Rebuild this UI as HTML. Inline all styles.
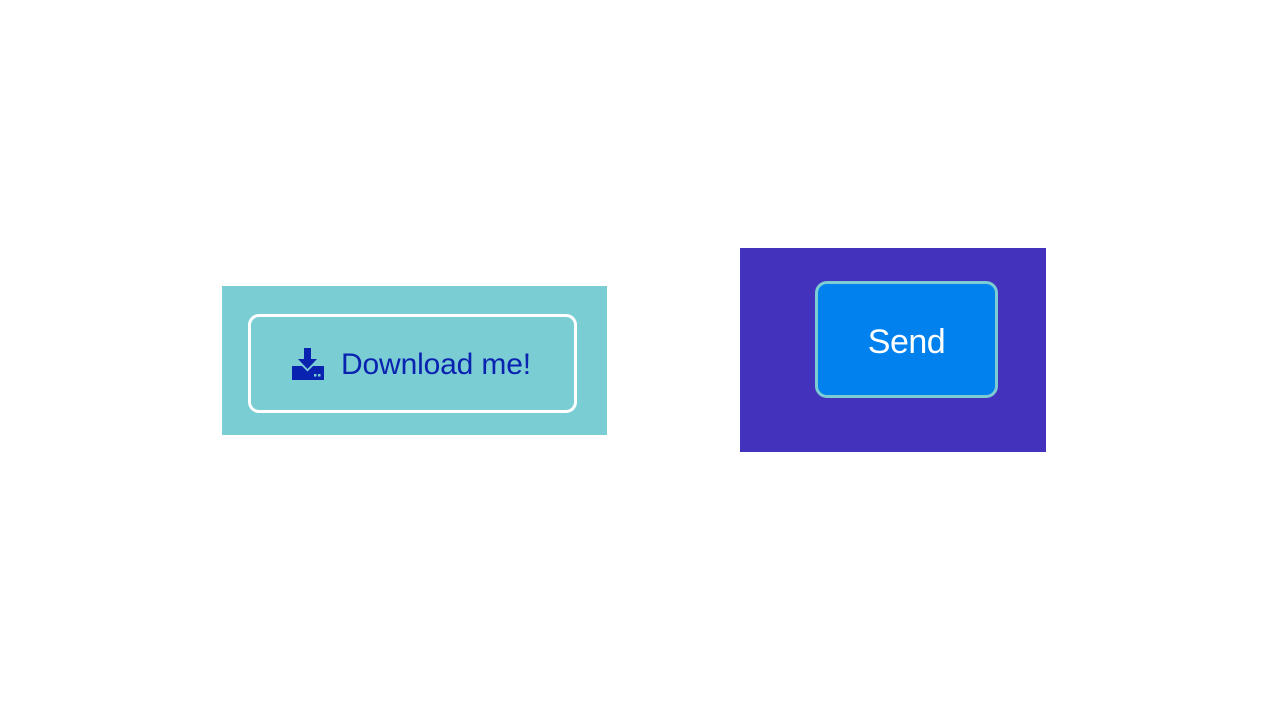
<!DOCTYPE html>
<html><head><style>
body{margin:0;width:1280px;height:720px;background:#fff;position:relative;overflow:hidden;font-family:"Liberation Sans",sans-serif}
.p1{position:absolute;left:222px;top:286px;width:385px;height:149px;background:#7acdd3}
.b1{position:absolute;left:248px;top:314px;width:323px;height:93px;border:3px solid #fff;border-radius:11px}
.t1{position:absolute;left:341px;top:347px;font-size:30px;color:#0a22b0;letter-spacing:-0.15px;white-space:nowrap;line-height:36px}
.p2{position:absolute;left:740px;top:248px;width:306px;height:204px;background:#4232bc}
.b2{position:absolute;left:815px;top:281px;width:177px;height:111px;border:3px solid #7bcdd3;border-radius:12px;background:#0081ee}
.t2{position:absolute;left:815px;top:321px;width:183px;text-align:center;font-size:34px;color:#fff;line-height:42px;letter-spacing:-0.5px}
</style></head><body>
<div class="p1"></div><div class="b1"></div>
<svg style="position:absolute;left:292px;top:348px" width="32" height="32" viewBox="0 0 32 32">
<path d="M12 0h7v11h6l-9.5 10L6 11h6z" fill="#0a22b0"/>
<path d="M0 18h10l5.5 5.5L21 18h11v14H0z" fill="#0a22b0"/>
<rect x="22" y="26" width="2.5" height="2.5" fill="#7acdd3"/><rect x="26" y="26" width="2.5" height="2.5" fill="#7acdd3"/>
</svg>
<div class="t1">Download me!</div>
<div class="p2"></div><div class="b2"></div>
<div class="t2">Send</div>
</body></html>
